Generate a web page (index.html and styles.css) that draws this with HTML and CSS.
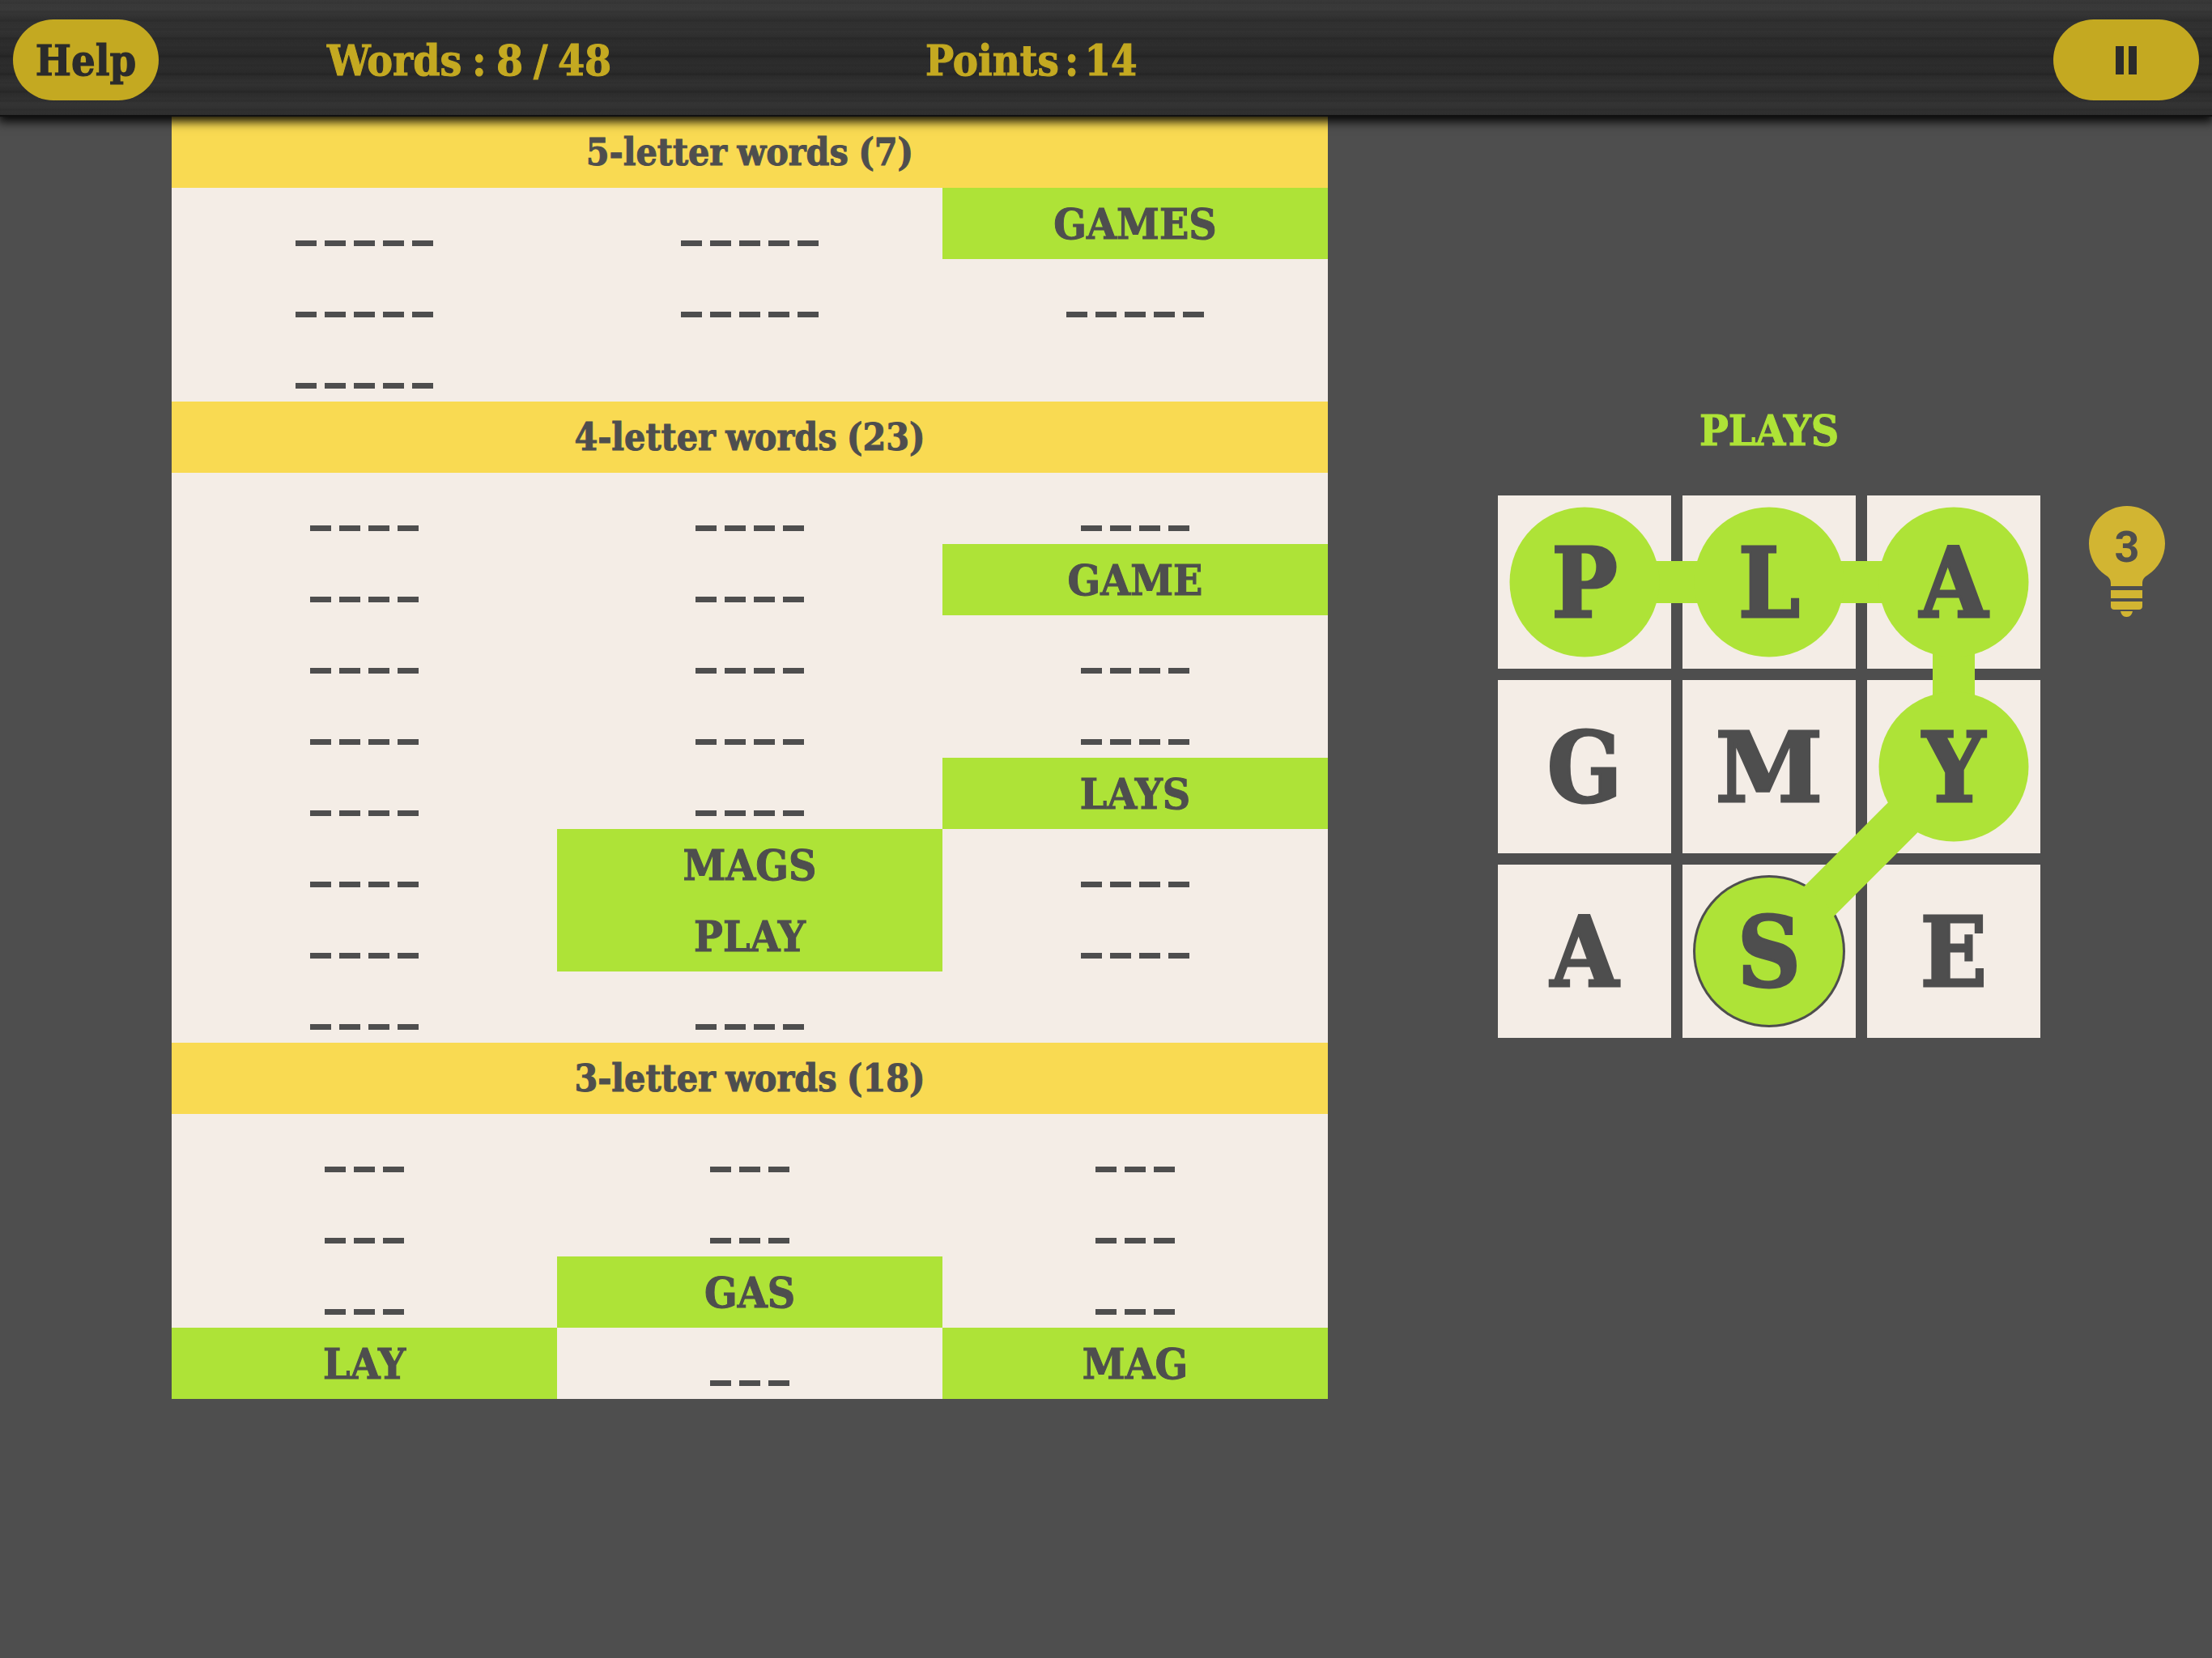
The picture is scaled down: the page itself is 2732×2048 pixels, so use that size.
FILE: index.html
```html
<!DOCTYPE html>
<html>
  <head>
    <meta charset="utf-8" />
    <title>Word Game</title>
    <link rel="stylesheet" href="styles.css">
  </head>
  <body>
    <header class="topbar">
      <div class="pill help">Help</div>
      <div class="stat stat-words">Words : 8 / 48</div>
      <div class="stat stat-points">Points : 14</div>
      <div class="pill pause"><span></span><span></span></div>
    </header>

    <main class="game">
      <section class="words">
        <h2 class="group">5-letter words (7)</h2>
        <div class="rows">
          <div class="cell"><span class="blank b5"></span></div>
          <div class="cell"><span class="blank b5"></span></div>
          <div class="cell found">GAMES</div>
          <div class="cell"><span class="blank b5"></span></div>
          <div class="cell"><span class="blank b5"></span></div>
          <div class="cell"><span class="blank b5"></span></div>
          <div class="cell"><span class="blank b5"></span></div>
        </div>

        <h2 class="group">4-letter words (23)</h2>
        <div class="rows">
          <div class="cell"><span class="blank b4"></span></div>
          <div class="cell"><span class="blank b4"></span></div>
          <div class="cell"><span class="blank b4"></span></div>
          <div class="cell"><span class="blank b4"></span></div>
          <div class="cell"><span class="blank b4"></span></div>
          <div class="cell found">GAME</div>
          <div class="cell"><span class="blank b4"></span></div>
          <div class="cell"><span class="blank b4"></span></div>
          <div class="cell"><span class="blank b4"></span></div>
          <div class="cell"><span class="blank b4"></span></div>
          <div class="cell"><span class="blank b4"></span></div>
          <div class="cell"><span class="blank b4"></span></div>
          <div class="cell"><span class="blank b4"></span></div>
          <div class="cell"><span class="blank b4"></span></div>
          <div class="cell found">LAYS</div>
          <div class="cell"><span class="blank b4"></span></div>
          <div class="cell found">MAGS</div>
          <div class="cell"><span class="blank b4"></span></div>
          <div class="cell"><span class="blank b4"></span></div>
          <div class="cell found">PLAY</div>
          <div class="cell"><span class="blank b4"></span></div>
          <div class="cell"><span class="blank b4"></span></div>
          <div class="cell"><span class="blank b4"></span></div>
        </div>

        <h2 class="group">3-letter words (18)</h2>
        <div class="rows">
          <div class="cell"><span class="blank b3"></span></div>
          <div class="cell"><span class="blank b3"></span></div>
          <div class="cell"><span class="blank b3"></span></div>
          <div class="cell"><span class="blank b3"></span></div>
          <div class="cell"><span class="blank b3"></span></div>
          <div class="cell"><span class="blank b3"></span></div>
          <div class="cell"><span class="blank b3"></span></div>
          <div class="cell found">GAS</div>
          <div class="cell"><span class="blank b3"></span></div>
          <div class="cell found">LAY</div>
          <div class="cell"><span class="blank b3"></span></div>
          <div class="cell found">MAG</div>
        </div>
      </section>

      <section class="panel">
        <div class="current">PLAYS</div>
        <div class="board">
          <svg class="trail" viewBox="0 0 670 670">
            <circle class="last-ring" cx="335" cy="563" r="94" />
            <polyline class="trail-line" points="107,107 335,107 563,107 563,335 335,563" />
            <circle class="node" cx="107" cy="107" r="92.500" />
            <circle class="node" cx="335" cy="107" r="92.500" />
            <circle class="node" cx="563" cy="107" r="92.500" />
            <circle class="node" cx="563" cy="335" r="92.500" />
            <circle class="node" cx="335" cy="563" r="91" />
          </svg>
          <div class="tile"><span>P</span></div>
          <div class="tile"><span>L</span></div>
          <div class="tile"><span>A</span></div>
          <div class="tile"><span>G</span></div>
          <div class="tile"><span class="wide">M</span></div>
          <div class="tile"><span>Y</span></div>
          <div class="tile"><span>A</span></div>
          <div class="tile"><span>S</span></div>
          <div class="tile"><span>E</span></div>
        </div>
        <div class="hint">
          <svg viewBox="0 0 94 138" width="94" height="138">
            <path class="bulb" d="M47 0C21 0 0 21 0 46.500C0 63 8.500 77 20 85C25 88 27 91 27 96V99H66V96C66 91 68 88 73 85C85 77 94 63 94 46.500C94 21 73 0 47 0Z" />
            <rect class="bulb" x="27" y="104" width="39" height="10" />
            <path class="bulb" d="M27 118H66V124C66 126.500 64 128 62 128H31C29 128 27 126.500 27 124Z" />
            <path class="bulb" d="M39 130H54C53 134 51 137 47 137H46C42 137 40 134 39 130Z" />
          </svg>
          <span class="hint-count">3</span>
        </div>
      </section>
    </main>
  </body>
</html>
```

FILE: styles.css
```css
* {
  box-sizing: border-box;
  margin: 0;
  padding: 0;
}

body {
  width: 2732px;
  height: 2048px;
  overflow: hidden;
  background: #4e4e4e;
  color: #4e4e4e;
  font-family: "DejaVu Serif Condensed", "DejaVu Serif", serif;
  font-weight: bold;
}

.topbar {
  position: relative;
  z-index: 5;
  display: flex;
  align-items: center;
  height: 144px;
  padding: 6px 16px 0;
  border-bottom: 2px solid #111;
  background:
    repeating-linear-gradient(180deg, rgba(255, 255, 255, 0.012) 0 2px, rgba(0, 0, 0, 0.015) 2px 5px, rgba(255, 255, 255, 0.01) 5px 11px),
    linear-gradient(180deg,
      rgba(255, 255, 255, 0.02) 0,
      rgba(255, 255, 255, 0.035) 12px,
      rgba(0, 0, 0, 0.03) 24px,
      rgba(255, 255, 255, 0.02) 38px,
      rgba(0, 0, 0, 0.04) 50px,
      rgba(255, 255, 255, 0.015) 58px,
      rgba(0, 0, 0, 0.07) 68px,
      rgba(255, 255, 255, 0.02) 80px,
      rgba(0, 0, 0, 0.05) 92px,
      rgba(255, 255, 255, 0.035) 103px,
      rgba(0, 0, 0, 0.04) 112px,
      rgba(255, 255, 255, 0.03) 128px,
      rgba(0, 0, 0, 0.03) 144px),
    linear-gradient(180deg, #323232 0%, #272727 50%, #2c2c2c 100%);
  box-shadow: 0 4px 12px 2px rgba(0, 0, 0, 0.95);
}

.pill {
  display: flex;
  align-items: center;
  justify-content: center;
  flex: none;
  width: 180px;
  height: 100px;
  border-radius: 50px;
  background: #c4a921;
}

.help {
  color: #2b2b2b;
  font-size: 52px;
  -webkit-text-stroke: 1px #2b2b2b;
}

.pause {
  gap: 6px;
  margin-left: auto;
}

.pause span {
  width: 10px;
  height: 35px;
  background: #2b2b2b;
}

.stat {
  color: #c4a921;
  white-space: nowrap;
  -webkit-text-stroke: 1px #c4a921;
}

.stat-words {
  width: 739px;
  margin-left: 208px;
  font-size: 53px;
  word-spacing: -4px;
}

.stat-points {
  font-size: 52px;
  word-spacing: -9px;
}

.game {
  display: flex;
  align-items: flex-start;
  padding-left: 212px;
}

.words {
  flex: none;
  width: 1428px;
  background: #f4ede6;
}

.group {
  height: 88px;
  background: #f9da52;
  font-size: 46px;
  line-height: 88px;
  text-align: center;
  word-spacing: -2px;
  -webkit-text-stroke: 1px #4e4e4e;
}

.rows {
  display: grid;
  grid-template-columns: repeat(3, 476px);
  grid-auto-rows: 88px;
}

.cell {
  display: flex;
  align-items: center;
  justify-content: center;
  font-size: 53px;
  -webkit-text-stroke: 1px #4e4e4e;
}

.found {
  background: #aee337;
}

.blank {
  align-self: flex-end;
  height: 7px;
  margin-bottom: 16px;
  background: repeating-linear-gradient(90deg, #4e4e4e 0 26px, transparent 26px 36px);
}

.b5 {
  width: 170px;
}

.b4 {
  width: 134px;
}

.b3 {
  width: 98px;
}

.panel {
  display: grid;
  grid-template-columns: 670px auto;
  margin-left: 210px;
  padding-top: 357px;
}

.current {
  margin-bottom: 51px;
  color: #aee337;
  font-size: 53px;
  line-height: 60px;
  text-align: center;
  -webkit-text-stroke: 1px #aee337;
}

.board {
  position: relative;
  grid-row: 2;
  display: grid;
  grid-template-columns: repeat(3, 214px);
  grid-auto-rows: 214px;
  gap: 14px;
}

.tile {
  display: flex;
  align-items: center;
  justify-content: center;
  background: #f4ede6;
  font-size: 120px;
  -webkit-text-stroke: 3px #4e4e4e;
}

.tile span {
  position: relative;
  z-index: 2;
}

.tile .wide {
  font-family: "DejaVu Serif", serif;
}

.trail {
  position: absolute;
  top: 0;
  left: 0;
  z-index: 1;
  width: 670px;
  height: 670px;
}

.trail-line {
  fill: none;
  stroke: #aee337;
  stroke-width: 52;
}

.node {
  fill: #aee337;
}

.last-ring {
  fill: #4e4e4e;
}

.hint {
  position: relative;
  grid-row: 2;
  width: 94px;
  height: 138px;
  margin: 13px 0 0 60px;
}

.bulb {
  fill: #d2b532;
}

.hint-count {
  position: absolute;
  top: 15px;
  left: 0;
  width: 94px;
  font-family: "Roboto", sans-serif;
  font-size: 54px;
  line-height: 72px;
  text-align: center;
}
```
